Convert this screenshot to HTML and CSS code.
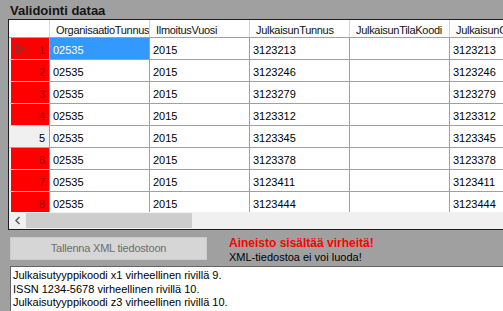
FILE: index.html
```html
<!DOCTYPE html>
<html lang="fi">
<head>
<meta charset="utf-8">
<title>Validointi dataa</title>
<link rel="stylesheet" href="styles.css">
</head>
<body>
<div class="title">Validointi dataa</div>
<div class="grid">
  <div class="hdr">
    <div class="corner"></div>
    <div class="hc">OrganisaatioTunnus</div>
    <div class="hc">IlmoitusVuosi</div>
    <div class="hc">JulkaisunTunnus</div>
    <div class="hc">JulkaisunTilaKoodi</div>
    <div class="hc">JulkaisunOrgTunnus</div>
  </div>
  <div class="body">
    <div class="row"><div class="rh err-row"><svg class="cur" width="8" height="10" viewBox="0 0 8 10"><polygon points="1,1 7,5 1,9" fill="none" stroke="#4a4a4a" stroke-width="1.2"/></svg><span>1</span></div><div class="cell sel">02535</div><div class="cell">2015</div><div class="cell">3123213</div><div class="cell"></div><div class="cell">3123213</div></div>
    <div class="row"><div class="rh err-row"><span>2</span></div><div class="cell">02535</div><div class="cell">2015</div><div class="cell">3123246</div><div class="cell"></div><div class="cell">3123246</div></div>
    <div class="row"><div class="rh err-row"><span>3</span></div><div class="cell">02535</div><div class="cell">2015</div><div class="cell">3123279</div><div class="cell"></div><div class="cell">3123279</div></div>
    <div class="row"><div class="rh err-row"><span>4</span></div><div class="cell">02535</div><div class="cell">2015</div><div class="cell">3123312</div><div class="cell"></div><div class="cell">3123312</div></div>
    <div class="row"><div class="rh ok-row"><span>5</span></div><div class="cell">02535</div><div class="cell">2015</div><div class="cell">3123345</div><div class="cell"></div><div class="cell">3123345</div></div>
    <div class="row"><div class="rh err-row"><span>6</span></div><div class="cell">02535</div><div class="cell">2015</div><div class="cell">3123378</div><div class="cell"></div><div class="cell">3123378</div></div>
    <div class="row"><div class="rh err-row"><span>7</span></div><div class="cell">02535</div><div class="cell">2015</div><div class="cell">3123411</div><div class="cell"></div><div class="cell">3123411</div></div>
    <div class="row"><div class="rh err-row"><span>8</span></div><div class="cell">02535</div><div class="cell">2015</div><div class="cell">3123444</div><div class="cell"></div><div class="cell">3123444</div></div>
  </div>
  <div class="hscroll">
    <div class="sarrow"><svg width="8" height="9" viewBox="0 0 8 9"><polyline points="5.5,1 2,4.5 5.5,8" fill="none" stroke="#5a5a5a" stroke-width="1.5"/></svg></div>
    <div class="thumb"></div>
  </div>
</div>
<div class="actions">
  <div class="btn">Tallenna XML tiedostoon</div>
  <div class="msg">
    <div class="err">Aineisto sisältää virheitä!</div>
    <div class="sub">XML-tiedostoa ei voi luoda!</div>
  </div>
</div>
<div class="log">
  <div>Julkaisutyyppikoodi x1 virheellinen rivillä 9.</div>
  <div>ISSN 1234-5678 virheellinen rivillä 10.</div>
  <div>Julkaisutyyppikoodi z3 virheellinen rivillä 10.</div>
</div>
</body>
</html>
```
FILE: styles.css
```css
html, body {
  margin: 0;
  padding: 0;
}
body {
  width: 503px;
  height: 311px;
  overflow: hidden;
  background: #a0a0a0;
  font-family: "Liberation Sans", Arial, sans-serif;
  font-size: 11px;
  color: #000;
}
.title {
  height: 19px;
  box-sizing: border-box;
  padding: 3px 0 0 10px;
  font-size: 13px;
  font-weight: bold;
  line-height: 15px;
  color: #141414;
}
.grid {
  margin-left: 8px;
  width: 640px;
  border: 1px solid #1e1e1e;
  background: #fff;
}
.hdr {
  display: flex;
  height: 18px;
  box-sizing: border-box;
  border-bottom: 1px solid #a0a0a0;
  background: #fff;
}
.corner {
  flex: none;
  width: 41px;
  box-sizing: border-box;
  border-right: 1px solid #d8d8d8;
}
.hc {
  flex: none;
  width: 100px;
  box-sizing: border-box;
  border-right: 1px solid #d2d2d2;
  padding: 3px 0 0 6px;
  line-height: 14px;
  white-space: nowrap;
  overflow: hidden;
  letter-spacing: -0.3px;
  color: #111;
}
.body {
  height: 174px;
  overflow: hidden;
}
.row {
  display: flex;
  height: 22px;
}
.rh {
  flex: none;
  width: 41px;
  box-sizing: border-box;
  border-left: 2px solid #f0f0f0;
  border-right: 1px solid #a0a0a0;
  display: flex;
  align-items: flex-start;
  padding: 5px 4px 0 3px;
  line-height: 15px;
}
.rh span {
  margin-left: auto;
}
.err-row {
  background: #ff0000;
  color: #a00000;
  border-bottom: 1px solid #f6b4b4;
}
.ok-row {
  background: #f0f0f0;
  color: #000;
  border-bottom: 1px solid #a0a0a0;
}
.cur {
  margin-top: 1px;
  margin-left: 2px;
}
.cell {
  flex: none;
  width: 100px;
  box-sizing: border-box;
  border-right: 1px solid #a0a0a0;
  border-bottom: 1px solid #a0a0a0;
  padding: 5px 0 0 3px;
  line-height: 15px;
  white-space: nowrap;
  overflow: hidden;
}
.sel {
  background: #3399ff;
  color: #fff;
}
.hscroll {
  display: flex;
  height: 17px;
  background: #f0f0f0;
}
.sarrow {
  flex: none;
  width: 17px;
  display: flex;
  align-items: center;
  justify-content: center;
}
.thumb {
  flex: none;
  width: 166px;
  margin: 1px 0;
  background: #cdcdcd;
}
.actions {
  display: flex;
  height: 36px;
  box-sizing: border-box;
  padding-top: 6px;
}
.btn {
  flex: none;
  margin: 1px 0 0 10px;
  width: 197px;
  height: 23px;
  box-sizing: border-box;
  background: #d6d6d6;
  border: 1px solid #cbcbcb;
  color: #6d6d6d;
  text-align: center;
  line-height: 21px;
  letter-spacing: -0.2px;
}
.msg {
  margin-left: 22px;
  line-height: 14px;
}
.err {
  color: #ff0000;
  font-size: 12px;
  font-weight: bold;
}
.sub {
  color: #000;
}
.log {
  margin-left: 10px;
  height: 45px;
  box-sizing: border-box;
  border-top: 1px solid #646464;
  border-left: 1px solid #646464;
  background: #fff;
  padding: 2px 0 0 2px;
  line-height: 13.5px;
}
```
